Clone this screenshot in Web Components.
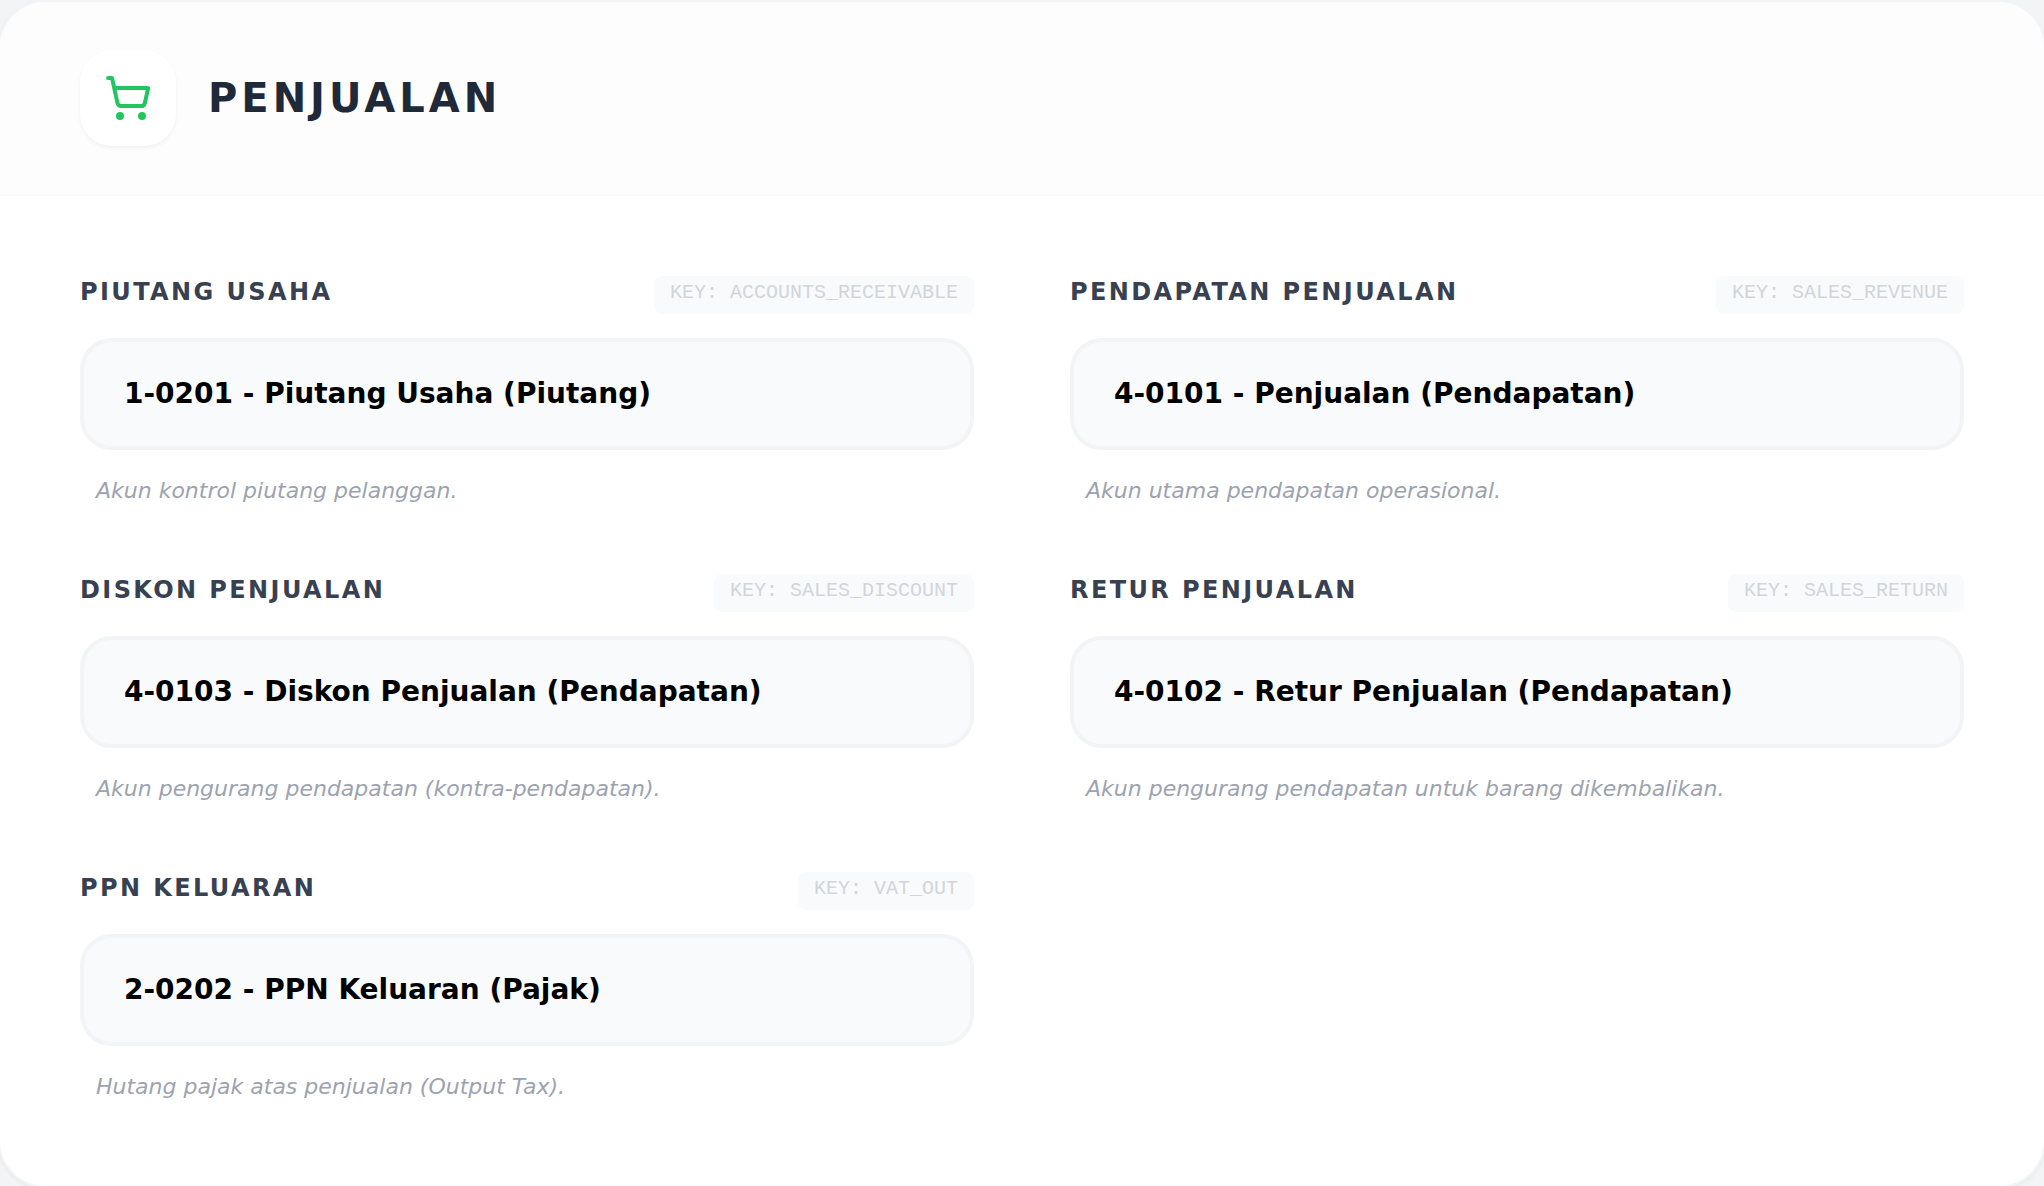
<!DOCTYPE html>
<html lang="id">
<head>
<meta charset="utf-8">
<title>Penjualan</title>
<style>
body { margin: 0; background: #f3f4f6; font-family: "DejaVu Sans", sans-serif; overflow-x: hidden; }
</style>
</head>
<body>
<account-card heading="Penjualan">
  <account-field label="Piutang Usaha" key="ACCOUNTS_RECEIVABLE" value="1-0201 - Piutang Usaha (Piutang)">Akun kontrol piutang pelanggan.</account-field>
  <account-field label="Pendapatan Penjualan" key="SALES_REVENUE" value="4-0101 - Penjualan (Pendapatan)">Akun utama pendapatan operasional.</account-field>
  <account-field label="Diskon Penjualan" key="SALES_DISCOUNT" value="4-0103 - Diskon Penjualan (Pendapatan)">Akun pengurang pendapatan (kontra-pendapatan).</account-field>
  <account-field label="Retur Penjualan" key="SALES_RETURN" value="4-0102 - Retur Penjualan (Pendapatan)">Akun pengurang pendapatan untuk barang dikembalikan.</account-field>
  <account-field label="PPN Keluaran" key="VAT_OUT" value="2-0202 - PPN Keluaran (Pajak)">Hutang pajak atas penjualan (Output Tax).</account-field>
</account-card>

<template id="cart-tpl">
  <style>
    :host { display: flex; align-items: center; justify-content: center; width: 96px; height: 96px; border-radius: 32px; background: #fff; box-shadow: 0 2px 4px rgba(0,0,0,.05); color: #22c55e; }
    svg { display: block; width: 48px; height: 48px; }
  </style>
  <svg viewBox="0 0 24 24" fill="none" stroke="currentColor" stroke-width="2" stroke-linecap="round" stroke-linejoin="round" aria-hidden="true">
    <circle cx="8" cy="21" r="1"/><circle cx="19" cy="21" r="1"/>
    <path d="M2.05 2.05h2l2.66 12.42a2 2 0 0 0 2 1.58h9.78a2 2 0 0 0 1.95-1.57l1.65-7.43H5.12"/>
  </svg>
</template>

<template id="card-tpl">
  <style>
    :host { display: block; margin: 0 -2px; background: #fff; border: 2px solid #f3f4f6; border-radius: 48px; overflow: hidden; box-shadow: 0 2px 4px rgba(0,0,0,.05); }
    header { display: flex; align-items: center; gap: 32px; padding: 48px 80px; background: #fdfdfd; border-bottom: 2px solid #f9fafb; }
    h2 { margin: 0; font-size: 40px; line-height: 56px; font-weight: 700; letter-spacing: 4px; text-transform: uppercase; color: #1f2937; }
    .fields { display: grid; grid-template-columns: repeat(2, minmax(0, 1fr)); gap: 64px 96px; padding: 80px; }
  </style>
  <header><cart-badge></cart-badge><h2></h2></header>
  <div class="fields"><slot></slot></div>
</template>

<template id="field-tpl">
  <style>
    :host { display: flex; flex-direction: column; gap: 24px; }
    .top { display: flex; justify-content: space-between; align-items: flex-start; }
    label { font-size: 24px; line-height: 32px; font-weight: 700; letter-spacing: 2.4px; text-transform: uppercase; color: #374151; }
    .key { font: 20px/26px "Liberation Mono", monospace; padding: 4px 16px 8px; border-radius: 8px; background: #f9fafb; color: #d1d5db; }
    select { appearance: none; box-sizing: border-box; width: 100%; height: 112px; margin: 0; padding: 0 40px; border: 4px solid #f3f4f6; border-radius: 32px; background: #f9fafb; color: #000; font: 700 28px/40px "DejaVu Sans", sans-serif; }
    p { margin: 0; padding: 0 16px 2px; font-size: 22px; line-height: 34px; font-style: italic; color: #9ca3af; }
  </style>
  <div class="top"><label for="account"></label><span class="key"></span></div>
  <select id="account"><option></option></select>
  <p><slot></slot></p>
</template>

<script>
function stamp(host, id) {
  const root = host.attachShadow({ mode: "open" });
  root.append(document.getElementById(id).content.cloneNode(true));
  return root;
}
customElements.define("cart-badge", class extends HTMLElement {
  constructor() { super(); stamp(this, "cart-tpl"); }
});
customElements.define("account-card", class extends HTMLElement {
  connectedCallback() {
    if (this.shadowRoot) return;
    stamp(this, "card-tpl").querySelector("h2").textContent = this.getAttribute("heading");
  }
});
customElements.define("account-field", class extends HTMLElement {
  connectedCallback() {
    if (this.shadowRoot) return;
    const root = stamp(this, "field-tpl");
    root.querySelector("label").textContent = this.getAttribute("label");
    root.querySelector(".key").textContent = "KEY: " + this.getAttribute("key");
    root.querySelector("option").textContent = this.getAttribute("value");
  }
});
</script>
</body>
</html>
